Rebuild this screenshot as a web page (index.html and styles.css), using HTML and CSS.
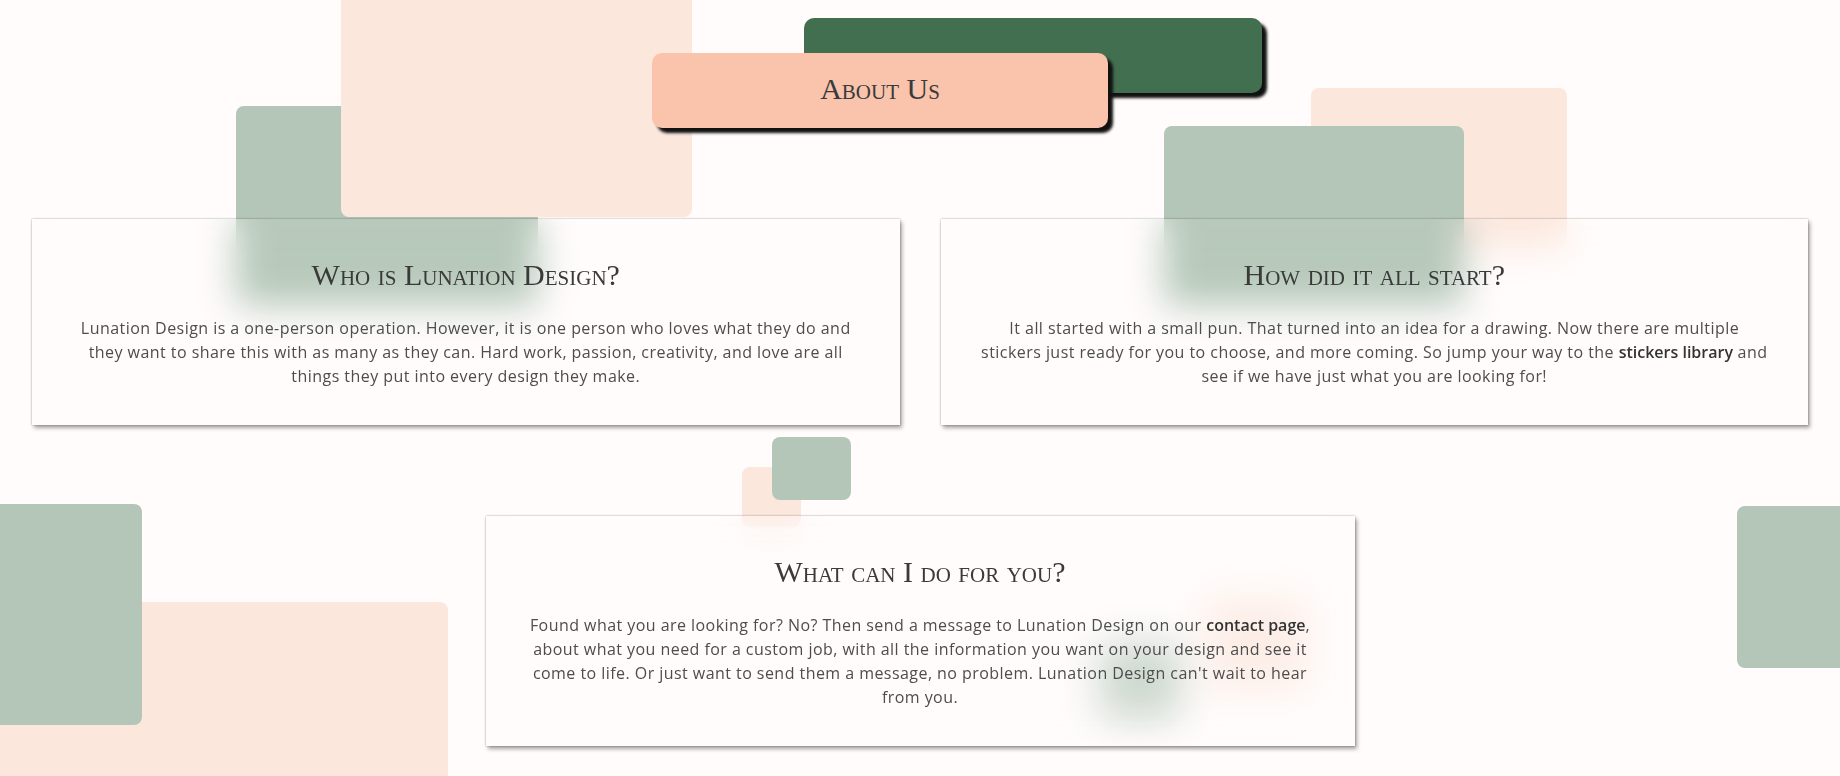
FILE: index.html
```html
<!DOCTYPE html>
<html>
<head>
    <link rel="stylesheet" href="styles.css">
</head>
<body>
    <div class="page">
        <!-- decorative blocks -->
        <div class="shape sage" id="s-left-green"></div>
        <div class="shape blush" id="s-left-peach"></div>
        <div class="shape blush" id="s-right-peach"></div>
        <div class="shape sage" id="s-right-green"></div>
        <div class="shape blush" id="s-mid-peach"></div>
        <div class="shape sage" id="s-mid-green"></div>
        <div class="shape sage soft" id="s-hidden-green"></div>
        <div class="shape blush soft" id="s-hidden-peach"></div>
        <div class="shape blush" id="s-bottom-peach"></div>
        <div class="shape sage" id="s-bottom-green"></div>
        <div class="shape sage" id="s-edge-green"></div>

        <header class="hero">
            <div class="title-back"></div>
            <h1 class="title">About Us</h1>
        </header>

        <section class="cards">
            <article class="card">
                <h2>Who is Lunation Design?</h2>
                <p>Lunation Design is a one-person operation. However, it is one person who loves what they do and they want to share this with as many as they can. Hard work, passion, creativity, and love are all things they put into every design they make.</p>
            </article>
            <article class="card">
                <h2>How did it all start?</h2>
                <p>It all started with a small pun. That turned into an idea for a drawing. Now there are multiple stickers just ready for you to choose, and more coming. So jump your way to the <a href="#">stickers library</a> and see if we have just what you are looking for!</p>
            </article>
        </section>

        <section class="cards single">
            <article class="card">
                <h2>What can I do for you?</h2>
                <p>Found what you are looking for? No? Then send a message to Lunation Design on our <a href="#">contact page</a>, about what you need for a custom job, with all the information you want on your design and see it come to life. Or just want to send them a message, no problem. Lunation Design can't wait to hear from you.</p>
            </article>
        </section>
    </div>
</body>
</html>
```

FILE: styles.css
```css
body {
    margin: 0;
    background: #fffcfb;
    color: #4d4d4d;
    font-family: "Open Sans", "Lato", sans-serif;
}

.page {
    position: relative;
    min-height: 100vh;
    height: 776px;
    overflow: hidden;
}

/* background blocks */
.shape {
    position: absolute;
    border-radius: 8px;
}

.sage {
    background: #b3c6b7;
}

.blush {
    background: #fce7dd;
}

.soft {
    opacity: 0.7;
    filter: blur(8px);
}

#s-left-green { left: 236px; top: 106px; width: 302px; height: 200px; }
#s-left-peach { left: 341px; top: -20px; width: 351px; height: 237px; }
#s-right-peach { left: 1311px; top: 88px; width: 256px; height: 160px; }
#s-right-green { left: 1164px; top: 126px; width: 300px; height: 180px; }
#s-mid-peach { left: 742px; top: 467px; width: 59px; height: 60px; }
#s-mid-green { left: 772px; top: 437px; width: 79px; height: 63px; }
#s-hidden-green { left: 1100px; top: 644px; width: 80px; height: 74px; }
#s-hidden-peach { left: 1206px; top: 598px; width: 100px; height: 92px; }
#s-bottom-peach { left: -20px; top: 602px; width: 468px; height: 240px; }
#s-bottom-green { left: -20px; top: 504px; width: 162px; height: 221px; }
#s-edge-green { left: 1737px; top: 506px; width: 140px; height: 162px; }

.hero {
    position: relative;
    display: flex;
    justify-content: center;
    padding-top: 53px;
}

.title-back {
    position: absolute;
    left: 804px;
    top: 18px;
    width: 458px;
    height: 75px;
    background: #436f51;
    border-radius: 10px;
    box-shadow: 5px 5px 3px #111;
}

.title {
    position: relative;
    width: 456px;
    height: 75px;
    margin: 0 80px 0 0;
    padding-bottom: 4px;
    box-sizing: border-box;
    background: #f9c3ac;
    border-radius: 10px;
    box-shadow: 5px 5px 3px #111;
    display: flex;
    align-items: center;
    justify-content: center;
}

h1, h2 {
    font-family: "Liberation Serif", serif;
    font-variant: small-caps;
    font-weight: normal;
    font-size: 30px;
    line-height: 34px;
    color: #3a3a3a;
}

.cards {
    position: relative;
    display: grid;
    grid-template-columns: 1fr 1fr;
    gap: 41px;
    padding: 0 32px;
    margin-top: 91px;
}

.cards.single {
    grid-template-columns: 869px;
    justify-content: center;
}

.card {
    padding: 39px 40px 37px;
    text-align: center;
    background: rgba(255, 252, 251, 0.06);
    backdrop-filter: blur(18px);
    box-shadow: 0 0 2px rgba(0, 0, 0, 0.35), 2px 3px 4px rgba(0, 0, 0, 0.35);
}

.card h2 {
    margin: 0 0 24px;
}

.card p {
    margin: 0;
    font-size: 16px;
    line-height: 24px;
    letter-spacing: 0.45px;
}

.card a {
    color: #333;
    font-weight: 600;
    letter-spacing: 0;
    text-decoration: none;
}
```
